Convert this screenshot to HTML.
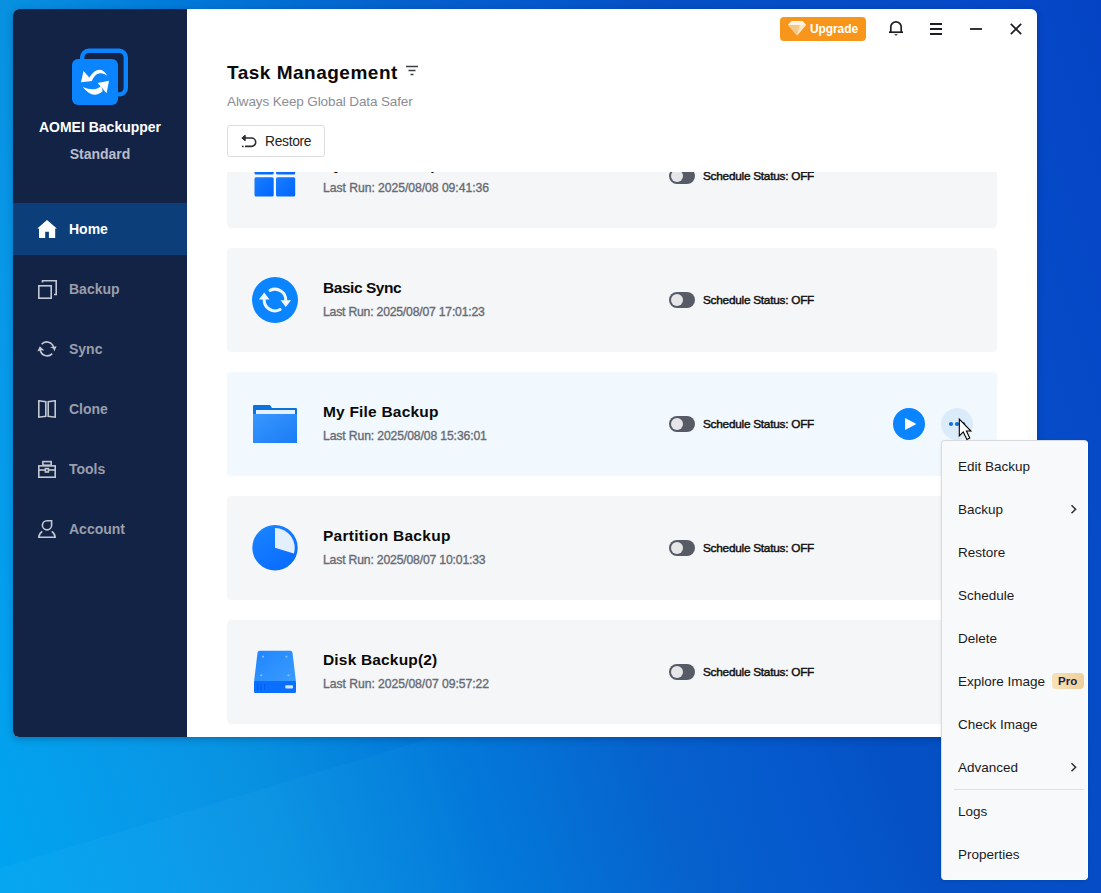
<!DOCTYPE html>
<html><head><meta charset="utf-8">
<style>
*{margin:0;padding:0;box-sizing:border-box}
html,body{width:1101px;height:893px;overflow:hidden}
body{position:relative;font-family:"Liberation Sans",sans-serif;background:linear-gradient(72deg,#00a4f0 0%,#0898e8 14%,#0890e0 21.6%,#0075d8 36%,#0560cc 50%,#0558cc 60%,#0450c4 67.5%,#064ac8 89%,#0444c4 100%)}
.abs{position:absolute}
#win{position:absolute;left:13px;top:9px;width:1024px;height:728px;border-radius:6px;box-shadow:0 2px 7px rgba(0,20,60,.28);background:#fff}
#side{position:absolute;left:13px;top:9px;width:174px;height:728px;background:#132346;border-radius:6px 0 0 6px}
.nav{position:absolute;left:13px;width:174px;height:52px;color:#9a9eaa;font-weight:bold;font-size:14px}
.nav span{position:absolute;left:56px;top:17px;line-height:18px}
.nav svg{position:absolute;left:24px;top:16px}
.nav.on{background:#0c3e7a;color:#fff}
.t{position:absolute;white-space:nowrap;line-height:1}
#list{position:absolute;left:187px;top:172px;width:850px;height:565px;overflow:hidden}
.card{position:absolute;left:40px;width:770px;height:104px;background:#f5f6f8;border-radius:4px}
.card.hov{background:#f1f8fe}
.card .ic{position:absolute;left:25px;top:29px;width:46px;height:46px}
.card .ti{position:absolute;left:96px;top:31px;font-weight:bold;font-size:15.5px;color:#0a0a0a;white-space:nowrap;line-height:17px}
.card .lr{position:absolute;left:96px;top:57px;font-size:12.2px;color:#676b74;white-space:nowrap;line-height:14px;-webkit-text-stroke:0.35px #676b74;letter-spacing:-0.28px}
.card .tg{position:absolute;left:442px;top:44px;width:26px;height:16px;border-radius:8px;background:#575b66}
.card .tg:after{content:"";position:absolute;left:2px;top:2px;width:12px;height:12px;border-radius:50%;background:#e6e6e8}
.card .ss{position:absolute;left:476px;top:45px;font-size:11.8px;color:#111;white-space:nowrap;line-height:14px;-webkit-text-stroke:0.45px #111;letter-spacing:-0.25px}
#menu{position:absolute;left:941px;top:440px;width:147px;height:440px;background:#f8f9fb;border:1px solid #d9dbe0;border-right-color:#fff;border-bottom-color:#fff;border-radius:4px;box-shadow:0 1px 3px rgba(0,0,0,.1)}
.mi{position:absolute;left:16px;font-size:13.5px;color:#1a1a1a;white-space:nowrap;line-height:16px}
</style></head><body>
<div class="abs" style="left:0;top:0;width:1101px;height:893px;clip-path:polygon(0 868px,435px 737px,1101px 737px,1101px 893px,0 893px);background:linear-gradient(90deg,rgba(60,190,255,.10),rgba(60,190,255,.06) 40%,rgba(60,190,255,0) 70%)"></div>
<div id="win"></div>
<div id="side"></div>

<!-- logo -->
<svg class="abs" style="left:70px;top:46px" width="60" height="62" viewBox="0 0 60 62">
  <rect x="12.2" y="4.8" width="43.6" height="43.6" rx="6.5" fill="none" stroke="#0a84ff" stroke-width="4.4"/>
  <rect x="2" y="13" width="46" height="46" rx="6" fill="#0a84ff"/>
  <path d="M13.5 25 L11 36.3 L22.5 35.1 Z" fill="#fff"/>
  <path d="M18 34.5 C22 25 31 18.5 37.3 29.7 C32 26 26 26 22.3 34 Z" fill="#fff"/>
  <path d="M27.6 37.1 L39 34.75 L36.6 47.3 Z" fill="#fff"/>
  <path d="M12.7 41 Q23.1 54 32.7 44.9 L31 40 Q24.45 46.2 12.7 41 Z" fill="#fff"/>
</svg>
<div class="t" style="left:13px;width:174px;text-align:center;top:120px;color:#fff;font-weight:bold;font-size:14px">AOMEI Backupper</div>
<div class="t" style="left:13px;width:174px;text-align:center;top:147px;color:#b9bdcc;font-weight:bold;font-size:14px">Standard</div>

<div class="nav on" style="top:203px"><svg width="20" height="20" viewBox="0 0 20 20" style="left:24px;top:16px"><path d="M10 1 L0.3 9.5 H2 V19 H8.2 V12.8 H11.9 V19 H18.2 V9.5 H19.9 Z" fill="#fff"/></svg><span>Home</span></div>
<div class="nav" style="top:263px"><svg width="20" height="20" viewBox="0 0 20 20" style="left:24px;top:16px" fill="none" stroke="#c4c8d0" stroke-width="1.6"><rect x="1.8" y="6.8" width="12.4" height="12.4"/><path d="M5.5 3.5 V1.8 H19.2 V15.5 H17"/></svg><span>Backup</span></div>
<div class="nav" style="top:323px"><svg width="20" height="20" viewBox="0 0 20 20" style="left:24px;top:16px" fill="none" stroke="#c4c8d0" stroke-width="1.6"><path d="M4.6 5.2 A7 7 0 0 1 16.6 8.6"/><path d="M15.2 14.6 A7 7 0 0 1 3.2 11"/><path d="M12.8 8.3 L19.6 7.3 L17.3 12.6 L16.2 9.4 Z" fill="#c4c8d0" stroke="none"/><path d="M0.3 12.6 L2.8 7.2 L7.4 11.5 L3.8 11.2 Z" fill="#c4c8d0" stroke="none"/></svg><span>Sync</span></div>
<div class="nav" style="top:383px"><svg width="20" height="20" viewBox="0 0 20 20" style="left:24px;top:16px" fill="none" stroke="#c4c8d0" stroke-width="1.6"><path d="M1.8 1.8 L8.8 2.8 V17.2 L1.8 18.2 Z"/><path d="M18.2 1.8 L11.2 2.8 V17.2 L18.2 18.2 Z"/></svg><span>Clone</span></div>
<div class="nav" style="top:443px"><svg width="20" height="20" viewBox="0 0 20 20" style="left:24px;top:16px" fill="none" stroke="#c4c8d0" stroke-width="1.6"><rect x="5.9" y="2.6" width="8.3" height="3.6"/><rect x="1.8" y="6.9" width="16.4" height="11.3"/><path d="M1.8 11 H18.2"/><rect x="8.4" y="9.6" width="3" height="3.4" fill="#132346"/></svg><span>Tools</span></div>
<div class="nav" style="top:503px"><svg width="20" height="20" viewBox="0 0 20 20" style="left:24px;top:16px" fill="none" stroke="#c4c8d0" stroke-width="1.6"><path d="M14.6 1.7 V6.3 A4.6 4.6 0 1 1 10 1.7 Z"/><path d="M5.3 12.3 A8 8 0 0 0 1.8 18.3 H18.2 A8 8 0 0 0 14.7 12.3"/></svg><span>Account</span></div>

<!-- header -->
<div class="abs" style="left:780px;top:17px;width:86px;height:24px;background:#f7961a;border-radius:4px"></div>
<div class="t" style="left:810px;top:23px;color:#fff;font-weight:bold;font-size:12px;letter-spacing:-0.1px">Upgrade</div>
<svg class="abs" style="left:787px;top:20px" width="20" height="16" viewBox="0 0 20 16">
  <path d="M4.5 1 H15.5 L19 5 L10 15.5 L1 5 Z" fill="#f5cf94"/>
  <path d="M4.5 1 H15.5 L19 5 H1 Z" fill="#fdf3e0"/>
  <path d="M1 5 H19 L10 15.5 Z" fill="#f3c98a"/>
  <path d="M13 5 H19 L10 15.5 Z" fill="#fbe7c4"/>
</svg>
<svg class="abs" style="left:887px;top:19px" width="18" height="19" viewBox="0 0 18 19" fill="none" stroke="#1e1e24" stroke-width="1.7">
  <path d="M3.8 13 V8 A5.2 5.2 0 0 1 14.2 8 V13"/>
  <path d="M2 13.2 H16"/>
  <path d="M7 15.3 H11 L9 16.8 Z" fill="#1e1e24" stroke="none"/>
</svg>
<svg class="abs" style="left:929px;top:22px" width="14" height="14" viewBox="0 0 14 14" fill="none" stroke="#1e1e24" stroke-width="1.8">
  <path d="M1 2 H13 M1 7 H13 M1 12 H13"/>
</svg>
<svg class="abs" style="left:969px;top:22px" width="14" height="14" viewBox="0 0 14 14" fill="none" stroke="#1e1e24" stroke-width="1.8">
  <path d="M1 7 H13"/>
</svg>
<svg class="abs" style="left:1009px;top:22px" width="14" height="14" viewBox="0 0 14 14" fill="none" stroke="#1e1e24" stroke-width="1.7">
  <path d="M1.8 1.8 L12.2 12.2 M12.2 1.8 L1.8 12.2"/>
</svg>

<div class="t" style="left:227px;top:63px;font-weight:bold;font-size:19px;letter-spacing:0.5px;color:#0a0a0a">Task Management</div>
<svg class="abs" style="left:405px;top:65px" width="14" height="12" viewBox="0 0 14 12" fill="none" stroke="#3a3d44" stroke-width="1.6">
  <path d="M1 1.5 H13 M3.5 5.5 H10.5 M5.5 9.5 H8.5"/>
</svg>
<div class="t" style="left:227px;top:95px;font-size:13.5px;letter-spacing:-0.12px;color:#8a8d93">Always Keep Global Data Safer</div>
<div class="abs" style="left:227px;top:125px;width:98px;height:32px;border:1px solid #dcdde0;border-radius:3px;background:#fff"></div>
<div class="t" style="left:265px;top:135px;font-size:13.8px;letter-spacing:-0.3px;color:#222">Restore</div>
<svg class="abs" style="left:240px;top:134px" width="18" height="14" viewBox="0 0 18 14" fill="none" stroke="#2a2d34" stroke-width="1.6">
  <path d="M4 4 H11.5 A4.2 4.2 0 0 1 11.5 12.4 H5"/>
  <path d="M1.8 4 L5.2 1.2 V6.8 Z" fill="#2a2d34" stroke-width="1"/>
  <circle cx="2.8" cy="12.4" r="0.9" fill="#2a2d34" stroke="none"/>
</svg>

<div id="list">
  <div class="card" style="top:-48px"><svg class="ic" viewBox="0 0 46 46" width="46" height="46">
  <defs><linearGradient id="gw" x1="0" y1="0" x2="1" y2="1"><stop offset="0" stop-color="#1a7dff"/><stop offset="1" stop-color="#0066ff"/></linearGradient></defs>
  <rect x="2.5" y="2" width="19.2" height="19.5" rx="1.5" fill="url(#gw)"/>
  <rect x="24" y="2" width="19.2" height="19.5" rx="1.5" fill="url(#gw)"/>
  <rect x="2.5" y="24.2" width="19.2" height="19.3" rx="1.5" fill="url(#gw)"/>
  <rect x="24" y="24.2" width="19.2" height="19.3" rx="1.5" fill="url(#gw)"/>
</svg><div class="ti" style="top:32px;letter-spacing:0.1px">System Backup</div><div class="lr" style="letter-spacing:-0.05px">Last Run: 2025/08/08 09:41:36</div><div class="tg"></div><div class="ss">Schedule Status: OFF</div></div>
  <div class="card" style="top:76px"><svg class="ic" viewBox="0 0 46 46" width="46" height="46">
  <circle cx="23" cy="23" r="23" fill="#0a84ff"/>
  <path d="M18.1 13.4 A10.8 10.8 0 0 1 33.8 23.5" fill="none" stroke="#eef6ff" stroke-width="3" stroke-linecap="round"/>
  <path d="M28.07 32.54 A10.8 10.8 0 0 1 12.2 22.5" fill="none" stroke="#eef6ff" stroke-width="3" stroke-linecap="round"/>
  <path d="M28.6 23.2 H39 L33.8 30 Z" fill="#eef6ff"/>
  <path d="M12.2 15.6 L17.5 22.6 H6.9 Z" fill="#eef6ff"/>
</svg><div class="ti" style="letter-spacing:-0.45px">Basic Sync</div><div class="lr" style="letter-spacing:-0.2px">Last Run: 2025/08/07 17:01:23</div><div class="tg"></div><div class="ss">Schedule Status: OFF</div></div>
  <div class="card hov" style="top:200px"><svg class="ic" viewBox="0 0 46 46" width="46" height="46">
  <defs><linearGradient id="gf" x1="0" y1="0" x2="1" y2="1"><stop offset="0" stop-color="#3a97ff"/><stop offset="1" stop-color="#1a7cf5"/></linearGradient></defs>
  <path d="M1 5 Q1 4 2 4 H18 L20 7 H44 Q45 7 45 8 V18 H1 Z" fill="#0b73e0"/>
  <rect x="4" y="9" width="39" height="4" fill="#e8f1fb"/>
  <rect x="1" y="13" width="44" height="29" fill="url(#gf)"/>
</svg><div class="ti" style="letter-spacing:0.2px">My File Backup</div><div class="lr" style="letter-spacing:-0.125px">Last Run: 2025/08/08 15:36:01</div><div class="tg"></div><div class="ss">Schedule Status: OFF</div></div>
  <div class="card" style="top:324px"><svg class="ic" viewBox="0 0 46 46" width="46" height="46">
  <defs><linearGradient id="gp" x1="0" y1="0" x2="0.6" y2="1"><stop offset="0" stop-color="#1a86ff"/><stop offset="1" stop-color="#0a6dff"/></linearGradient></defs>
  <circle cx="23" cy="22.7" r="22.7" fill="url(#gp)"/>
  <path d="M23 22.7 V3 A19.8 19.8 0 0 1 41.9 28.4 Z" fill="#e3effc"/>
</svg><div class="ti" style="letter-spacing:0.28px">Partition Backup</div><div class="lr" style="letter-spacing:-0.17px">Last Run: 2025/08/07 10:01:33</div><div class="tg"></div><div class="ss">Schedule Status: OFF</div></div>
  <div class="card" style="top:448px"><svg class="ic" viewBox="0 0 46 46" width="46" height="46">
  <defs><linearGradient id="gd" x1="0" y1="0" x2="1" y2="1"><stop offset="0" stop-color="#1f85ff"/><stop offset="1" stop-color="#3b9cff"/></linearGradient></defs>
  <path d="M5.5 3.7 Q5.7 1.7 7.7 1.7 H38.3 Q40.3 1.7 40.5 3.7 L44 33 H2 Z" fill="url(#gd)"/>
  <rect x="2" y="32" width="42" height="12" rx="1.5" fill="#0a6fff"/>
  <rect x="33.3" y="36.3" width="7.7" height="3.1" rx="1" fill="#cfe6ff"/>
  <g fill="#a8d0ff" opacity=".75"><rect x="10" y="6.8" width="2" height="1.6"/><rect x="33.5" y="6.8" width="2" height="1.6"/><rect x="8.2" y="25.5" width="2" height="1.6"/><rect x="35.5" y="25.5" width="2" height="1.6"/></g>
  <g fill="#0656d8" opacity=".6"><rect x="5" y="35" width="1.2" height="6"/><rect x="8.5" y="35" width="1.2" height="6"/><rect x="12" y="35" width="1.2" height="6"/></g>
</svg><div class="ti" style="letter-spacing:0.17px">Disk Backup(2)</div><div class="lr" style="letter-spacing:-0.045px">Last Run: 2025/08/07 09:57:22</div><div class="tg"></div><div class="ss">Schedule Status: OFF</div></div>
</div>

<svg class="abs" style="left:893px;top:408px" width="32" height="32" viewBox="0 0 32 32">
  <circle cx="16" cy="16" r="16" fill="#0a84ff"/>
  <path d="M12.5 10.2 Q12 9.8 12 10.5 V21.5 Q12 22.2 12.5 21.8 L22.6 16.4 Q23.2 16 22.6 15.6 Z" fill="#fff"/>
</svg>
<svg class="abs" style="left:941px;top:408px" width="32" height="32" viewBox="0 0 32 32">
  <circle cx="16" cy="16" r="16" fill="#dcebfa"/>
  <circle cx="10" cy="16" r="2.1" fill="#0a6fe0"/>
  <circle cx="16" cy="16" r="2.1" fill="#0a6fe0"/>
  <circle cx="22.3" cy="16" r="2.1" fill="#0a6fe0"/>
</svg>

<div id="menu">
  <div class="mi" style="top:18px">Edit Backup</div>
  <div class="mi" style="top:61px">Backup</div>
  <div class="mi" style="top:104px">Restore</div>
  <div class="mi" style="top:147px">Schedule</div>
  <div class="mi" style="top:190px">Delete</div>
  <div class="mi" style="top:233px">Explore Image</div>
  <div class="mi" style="top:276px">Check Image</div>
  <div class="mi" style="top:319px">Advanced</div>
  <div class="mi" style="top:363px">Logs</div>
  <div class="mi" style="top:406px">Properties</div>
  <svg class="abs" style="left:128px;top:63px" width="8" height="11" viewBox="0 0 8 11" fill="none" stroke="#2a2d34" stroke-width="1.5"><path d="M1.5 1.2 L5.6 5.2 L1.5 9.2"/></svg>
  <svg class="abs" style="left:128px;top:321px" width="8" height="11" viewBox="0 0 8 11" fill="none" stroke="#2a2d34" stroke-width="1.5"><path d="M1.5 1.2 L5.6 5.2 L1.5 9.2"/></svg>
  <div class="abs" style="left:12px;top:348px;width:130px;height:1px;background:#dfe0e4"></div>
  <div class="abs" style="left:110px;top:232px;width:32px;height:16px;border-radius:4px;background:linear-gradient(90deg,#f6e2b8,#efcf9a)"></div>
  <div class="t" style="left:116px;top:235px;font-size:11.5px;font-weight:bold;color:#1c2444">Pro</div>
</div>
<svg class="abs" style="left:958px;top:418px" width="16" height="24" viewBox="0 0 16 24">
  <path d="M1.3 1.1 V17.9 L5.3 13.9 L8.9 21.5 L11.8 20.1 L8.4 13 H12.9 Z" fill="#fff" stroke="#000" stroke-width="1.1" stroke-linejoin="miter"/>
</svg>

</body></html>
